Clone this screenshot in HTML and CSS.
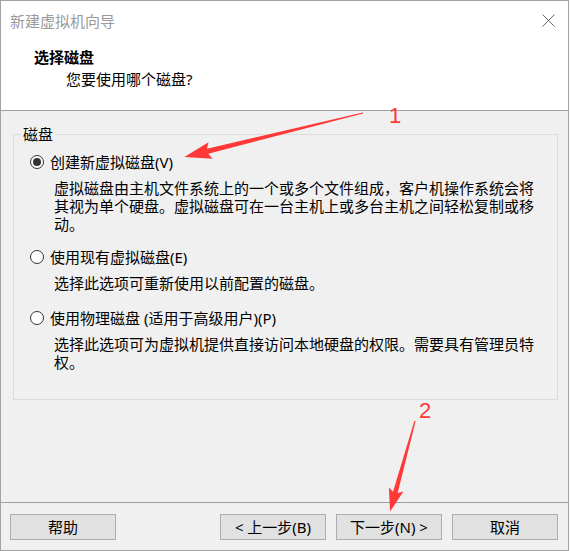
FILE: index.html
```html
<!DOCTYPE html>
<html lang="zh-CN">
<head>
<meta charset="utf-8">
<title>新建虚拟机向导</title>
<link rel="stylesheet" href="styles.css">
</head>
<body>
<div class="window">
  <div class="titlebar">
    <span class="title">新建虚拟机向导</span>
    <svg class="close" width="13" height="13" viewBox="0 0 13 13"><path d="M0.5 0.5 L12.5 12.5 M12.5 0.5 L0.5 12.5" stroke="#6a6a6a" stroke-width="1" fill="none"/></svg>
  </div>
  <div class="header">
    <div class="h-title">选择磁盘</div>
    <div class="h-sub">您要使用哪个磁盘?</div>
  </div>
  <div class="content">
    <fieldset class="group">
      <legend class="legend">磁盘</legend>
      <div class="options">
        <div class="option">
          <span class="radio checked"></span>
          <span class="label">创建新虚拟磁盘(V)</span>
        </div>
        <div class="desc">虚拟磁盘由主机文件系统上的一个或多个文件组成，客户机操作系统会将其视为单个硬盘。虚拟磁盘可在一台主机上或多台主机之间轻松复制或移动。</div>
        <div class="option gap">
          <span class="radio"></span>
          <span class="label">使用现有虚拟磁盘(E)</span>
        </div>
        <div class="desc">选择此选项可重新使用以前配置的磁盘。</div>
        <div class="option gap2">
          <span class="radio"></span>
          <span class="label">使用物理磁盘 (适用于高级用户)(P)</span>
        </div>
        <div class="desc">选择此选项可为虚拟机提供直接访问本地硬盘的权限。需要具有管理员特权。</div>
      </div>
    </fieldset>
  </div>
  <div class="footer">
    <button class="btn">帮助</button>
    <div class="spacer"></div>
    <button class="btn">&lt; 上一步(B)</button>
    <button class="btn">下一步(N) &gt;</button>
    <button class="btn">取消</button>
  </div>
</div>
<svg class="annot" width="570" height="551" viewBox="0 0 570 551">
  <polygon fill="#ff3838" transform="translate(363,113) rotate(166.2)" points="0,-0.6 160,-2.6 157,-8.5 184,0 157,8.5 160,2.6 0,0.6"/>
  <polygon fill="#ff3838" transform="translate(415,421) rotate(105.4)" points="0,-0.6 74,-2.4 71,-7.5 94,0 71,7.5 74,2.4 0,0.6"/>
  <text x="395" y="123" class="num">1</text>
  <text x="425" y="418" class="num">2</text>
</svg>
</body>
</html>
```
FILE: styles.css
```css
html, body {
  margin: 0;
  padding: 0;
  background: #ffffff;
}
body {
  position: relative;
  width: 570px;
  height: 551px;
  overflow: hidden;
  font-family: "Noto Sans", "Noto Sans CJK SC", sans-serif;
  font-size: 15px;
  color: #000;
}
.window {
  width: 569px;
  height: 551px;
  box-sizing: border-box;
  border: 1px solid #a3a3a3;
  display: flex;
  flex-direction: column;
  background: #f0f0f0;
}
.titlebar {
  height: 39px;
  flex: none;
  background: #fff;
  display: flex;
  align-items: center;
  justify-content: space-between;
  padding: 0 13px 0 9px;
}
.title {
  color: #9a9a9a;
  line-height: 20px;
}
.close {
  display: block;
}
.header {
  height: 70px;
  flex: none;
  background: #fff;
  box-sizing: border-box;
  padding-top: 7px;
  border-bottom: 1px solid #a0a0a0;
  height: 71px;
}
.h-title {
  font-weight: bold;
  line-height: 20px;
  padding-left: 33px;
}
.h-sub {
  line-height: 20px;
  margin-top: 2px;
  padding-left: 65px;
}
.content {
  flex: 1;
  border-bottom: 1px solid #a0a0a0;
  padding: 14px 10px 0 12px;
}
.group {
  margin: 0;
  padding: 0 0 0 0;
  height: 275px;
  box-sizing: border-box;
  border: 1px solid #dcdcdc;
  min-width: 0;
}
.legend {
  margin-left: 7px;
  padding: 0 2px;
  line-height: 18px;
}
.options {
  padding: 9px 0 0 16px;
}
.option {
  display: flex;
  align-items: center;
  height: 20px;
}
.option.gap {
  margin-top: 14px;
}
.option.gap2 {
  margin-top: 16px;
}
.radio {
  width: 14px;
  height: 14px;
  box-sizing: border-box;
  border: 1px solid #333;
  border-radius: 50%;
  background: #fff;
  margin-right: 6px;
  position: relative;
  flex: none;
}
.radio.checked::after {
  content: "";
  position: absolute;
  left: 2px;
  top: 2px;
  width: 8px;
  height: 8px;
  border-radius: 50%;
  background: #333;
}
.label {
  line-height: 20px;
}
.desc {
  margin: 7px 0 0 24px;
  width: 487px;
  line-height: 18px;
}
.footer {
  height: 47px;
  flex: none;
  box-sizing: border-box;
  padding: 11px 10px 0 9px;
  display: flex;
  align-items: flex-start;
  gap: 10px;
}
.spacer {
  flex: 1;
}
.btn {
  width: 106px;
  height: 26px;
  box-sizing: border-box;
  background: #e1e1e1;
  border: 1px solid #adadad;
  border-radius: 0;
  font-family: "Noto Sans", "Noto Sans CJK SC", sans-serif;
  font-size: 15px;
  line-height: 20px;
  color: #000;
  padding: 0;
  margin: 0;
}
.annot {
  position: absolute;
  left: 0;
  top: 0;
  pointer-events: none;
}
.num {
  fill: #ff3838;
  font-family: "Liberation Sans", sans-serif;
  font-size: 22px;
  text-anchor: middle;
}
```
